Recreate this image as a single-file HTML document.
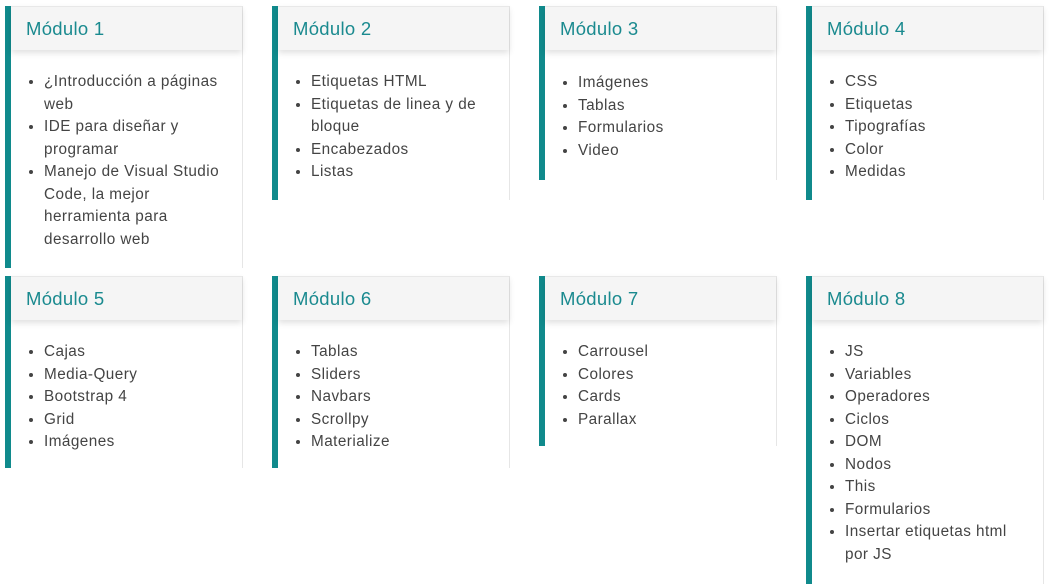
<!DOCTYPE html><html><head><style>
body{margin:0;width:1054px;height:584px;background:#fff;font-family:"Liberation Sans",sans-serif;overflow:hidden;position:relative}
.c{position:absolute;width:238px;box-sizing:border-box;border-left:6px solid #108a8c;border-right:1px solid #e6e6e6;background:#fff}
.h{height:43px;background:#f5f5f5;border-top:1px solid #e8e8e8;box-shadow:0 3px 6px rgba(0,0,0,.12);color:#1a8a8f;font-size:18.5px;line-height:43px;padding-left:15px;position:relative;letter-spacing:.3px}
ul{margin:0;padding:21px 12px 0 33px;font-size:15.3px;letter-spacing:.45px;line-height:22.5px;color:#444}
</style></head><body>
<div class="c" style="left:5px;top:6px;height:262px"><div class="h">Módulo 1</div><ul><li>¿Introducción a páginas web</li><li>IDE para diseñar y programar</li><li>Manejo de Visual Studio Code, la mejor herramienta para desarrollo web</li></ul></div>
<div class="c" style="left:272px;top:6px;height:194px"><div class="h">Módulo 2</div><ul><li>Etiquetas HTML</li><li>Etiquetas de linea y de bloque</li><li>Encabezados</li><li>Listas</li></ul></div>
<div class="c" style="left:539px;top:6px;height:174px"><div class="h">Módulo 3</div><ul style="padding-top:22px"><li>Imágenes</li><li>Tablas</li><li>Formularios</li><li>Video</li></ul></div>
<div class="c" style="left:806px;top:6px;height:194px"><div class="h">Módulo 4</div><ul><li>CSS</li><li>Etiquetas</li><li>Tipografías</li><li>Color</li><li>Medidas</li></ul></div>
<div class="c" style="left:5px;top:276px;height:192px"><div class="h">Módulo 5</div><ul><li>Cajas</li><li>Media-Query</li><li>Bootstrap 4</li><li>Grid</li><li>Imágenes</li></ul></div>
<div class="c" style="left:272px;top:276px;height:192px"><div class="h">Módulo 6</div><ul><li>Tablas</li><li>Sliders</li><li>Navbars</li><li>Scrollpy</li><li>Materialize</li></ul></div>
<div class="c" style="left:539px;top:276px;height:170px"><div class="h">Módulo 7</div><ul><li>Carrousel</li><li>Colores</li><li>Cards</li><li>Parallax</li></ul></div>
<div class="c" style="left:806px;top:276px;height:308px"><div class="h">Módulo 8</div><ul><li>JS</li><li>Variables</li><li>Operadores</li><li>Ciclos</li><li>DOM</li><li>Nodos</li><li>This</li><li>Formularios</li><li>Insertar etiquetas html por JS</li></ul></div>
</body></html>
